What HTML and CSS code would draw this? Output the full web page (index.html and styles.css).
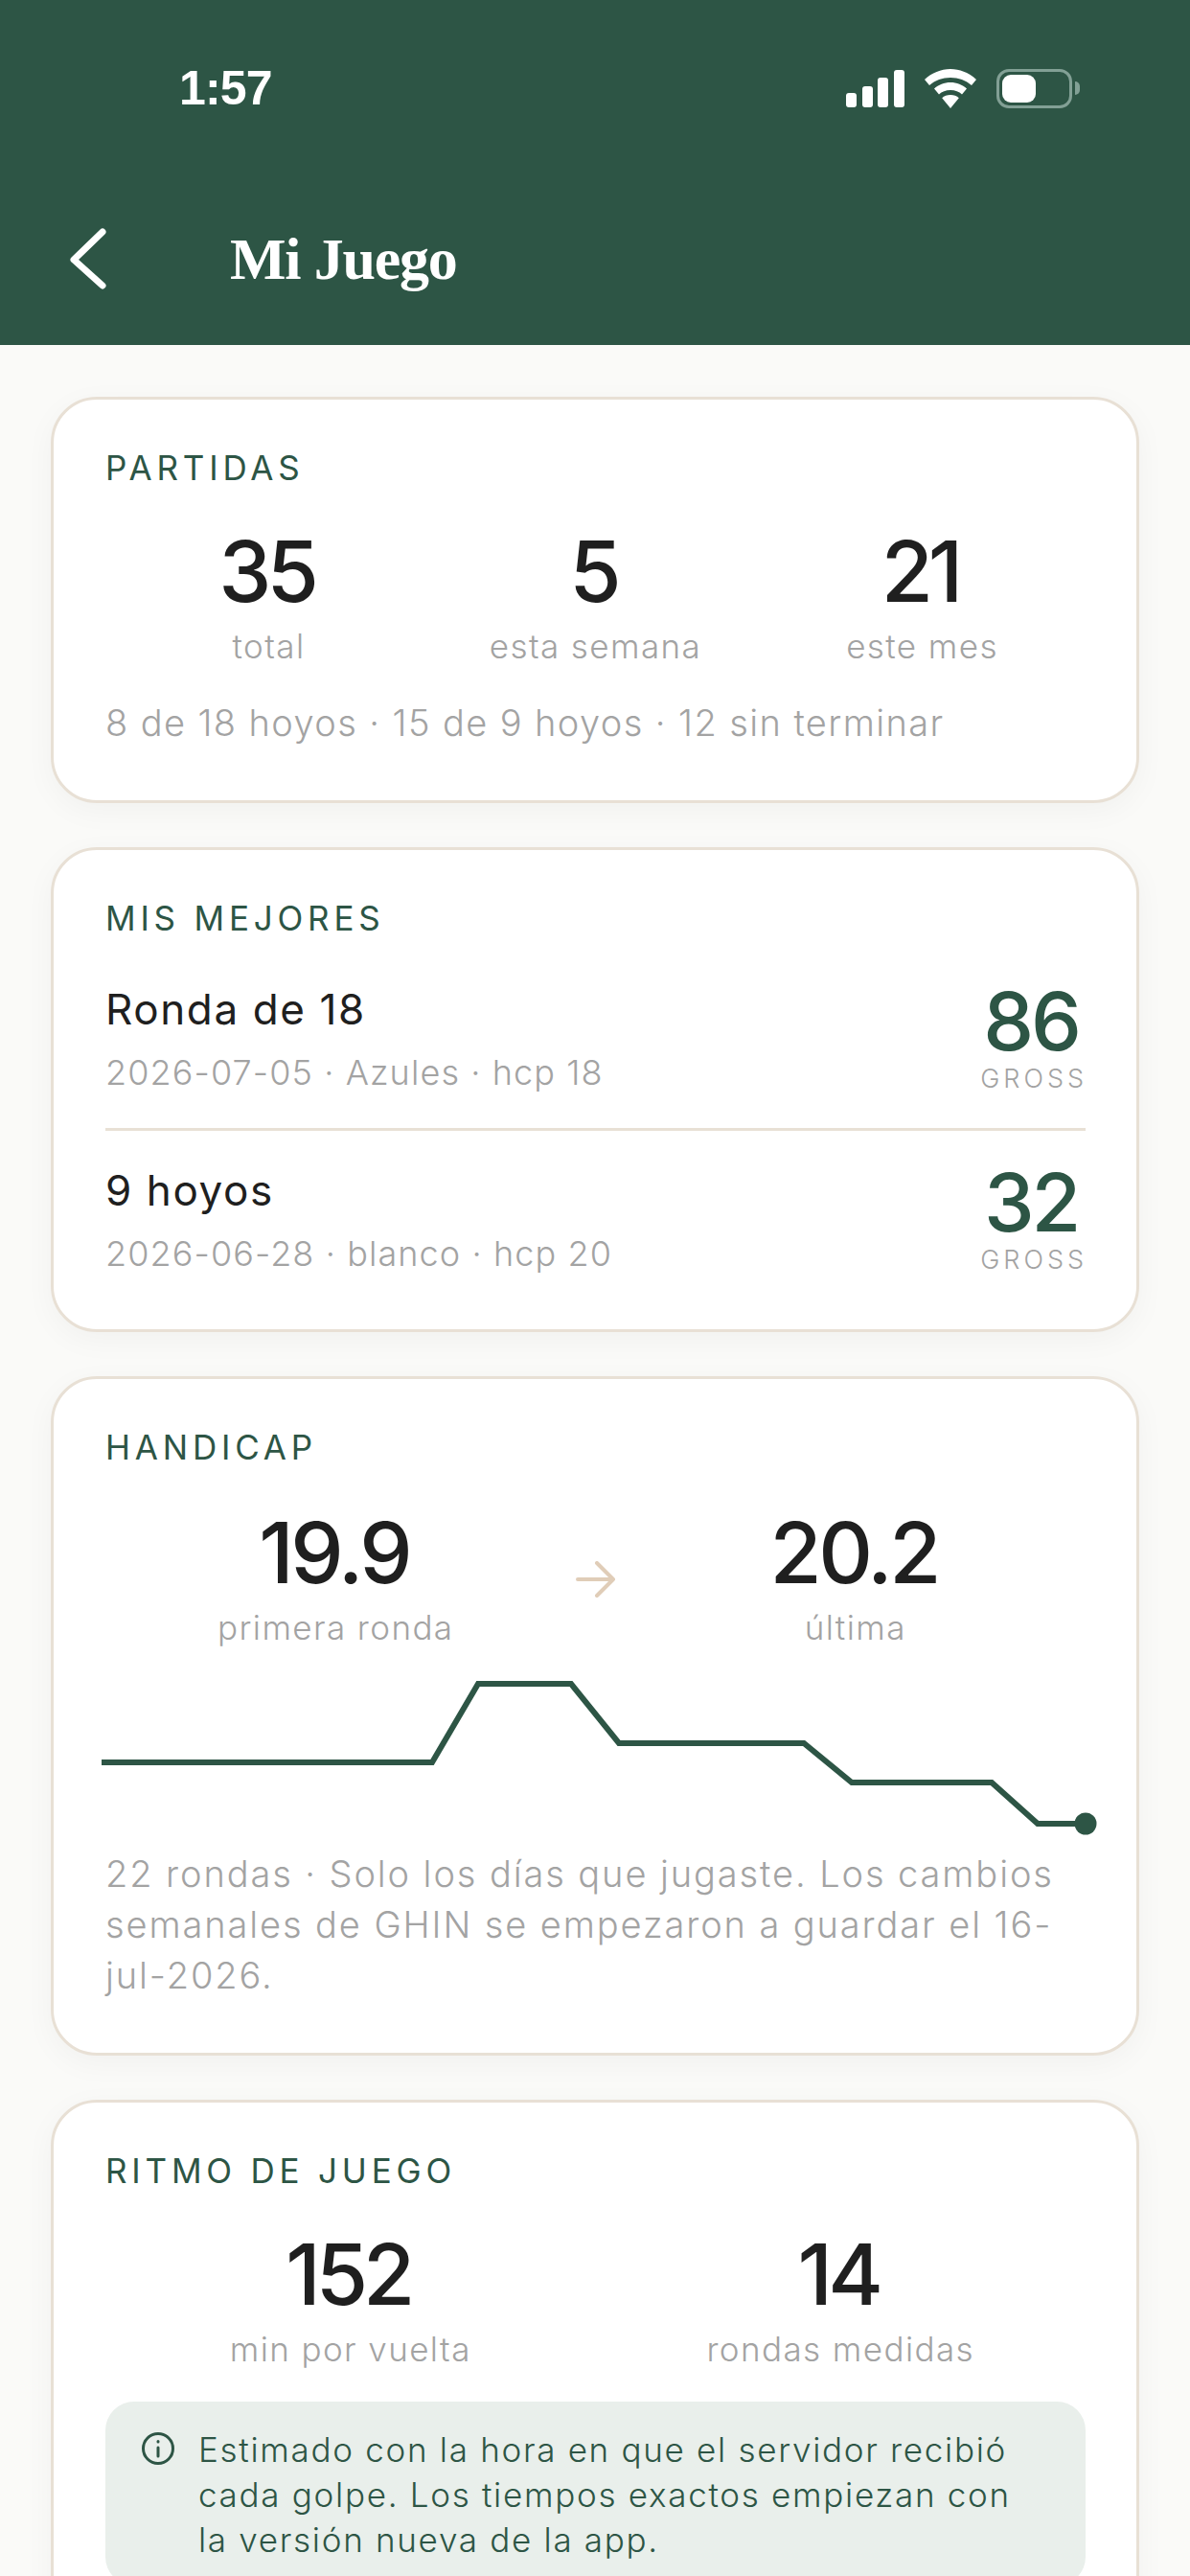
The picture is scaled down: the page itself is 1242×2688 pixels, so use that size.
FILE: index.html
```html
<!DOCTYPE html>
<html lang="es">
  <head>
    <meta charset="UTF-8" />
    <title>Mi Juego</title>
    <link rel="stylesheet" href="styles.css">
  </head>
  <body>
    <!-- Cabecera -->
    <header class="header">
      <div class="status-bar">
        <div class="status-time">1:57</div>
        <div class="status-icons">
          <svg width="61" height="39" viewBox="0 0 61 39" fill="#fff">
            <rect x="0" y="24" width="11" height="15" rx="3" />
            <rect x="17" y="17" width="11" height="22" rx="3" />
            <rect x="33" y="8" width="11" height="31" rx="3" />
            <rect x="50" y="0" width="11" height="39" rx="3" />
          </svg>
          <svg width="54" height="41" viewBox="0 0 54 41" fill="#fff">
            <path d="M27 0c10 0 19.500 4 27 11l-5 6C43 11.800 35.500 9 27 9S11 11.800 5 17l-5-6C7.500 4 17 0 27 0z" />
            <path d="M27 14c6.500 0 12.500 2.500 17 6.500l-5 6C36 23.500 31.800 22 27 22s-9 1.500-12 4.500l-5-6C14.500 16.500 20.500 14 27 14z" />
            <path d="M27 27c3.500 0 6.500 1.200 8.800 3.200L27 41l-8.800-10.800C20.500 28.200 23.500 27 27 27z" />
          </svg>
          <div class="battery">
            <div class="battery-level"></div>
            <div class="battery-cap"></div>
          </div>
        </div>
      </div>
      <div class="nav-bar">
        <svg class="back-icon" width="40" height="64" viewBox="0 0 40 64" fill="none" stroke="#fff" stroke-width="7" stroke-linecap="round" stroke-linejoin="round">
          <path d="M35 4 L5 33 L35 60" />
        </svg>
        <div class="nav-title">Mi Juego</div>
      </div>
    </header>

    <main class="content">
      <!-- Partidas -->
      <section class="card">
        <div class="card-title">PARTIDAS</div>
        <div class="stats stats-three">
          <div class="stat">
            <div class="stat-value">35</div>
            <div class="stat-label">total</div>
          </div>
          <div class="stat">
            <div class="stat-value">5</div>
            <div class="stat-label">esta semana</div>
          </div>
          <div class="stat">
            <div class="stat-value">21</div>
            <div class="stat-label">este mes</div>
          </div>
        </div>
        <div class="note note-games">8 de 18 hoyos · 15 de 9 hoyos · 12 sin terminar</div>
      </section>

      <!-- Mis mejores -->
      <section class="card">
        <div class="card-title">MIS MEJORES</div>
        <div class="best-row best-row-first">
          <div class="best-info">
            <div class="best-name">Ronda de 18</div>
            <div class="best-meta">2026-07-05 · Azules · hcp 18</div>
          </div>
          <div class="best-score">
            <div class="best-value">86</div>
            <div class="best-label">GROSS</div>
          </div>
        </div>
        <div class="best-row">
          <div class="best-info">
            <div class="best-name">9 hoyos</div>
            <div class="best-meta">2026-06-28 · blanco · hcp 20</div>
          </div>
          <div class="best-score">
            <div class="best-value">32</div>
            <div class="best-label">GROSS</div>
          </div>
        </div>
      </section>

      <!-- Handicap -->
      <section class="card">
        <div class="card-title">HANDICAP</div>
        <div class="handicap">
          <div class="stat">
            <div class="stat-value">19.9</div>
            <div class="stat-label">primera ronda</div>
          </div>
          <svg class="handicap-arrow" width="42" height="38" viewBox="0 0 42 38" fill="none" stroke="#e0cdb8" stroke-width="4" stroke-linecap="round" stroke-linejoin="round">
            <path d="M2 19 H39 M22 2 L39 19 L22 36" />
          </svg>
          <div class="stat">
            <div class="stat-value">20.2</div>
            <div class="stat-label">última</div>
          </div>
        </div>
        <svg class="chart" width="1042" height="164" viewBox="0 0 1042 164" fill="none">
          <polyline points="0,86 345,86 393,4 490,4 540,66 733,66 783,107 929,107 977,150 1027,150" stroke="#2d5545" stroke-width="6" />
          <circle cx="1027" cy="150" r="11.500" fill="#2d5545" />
        </svg>
        <div class="note note-handicap">22 rondas · Solo los días que jugaste. Los cambios semanales de GHIN se empezaron a guardar el 16-jul-2026.</div>
      </section>

      <!-- Ritmo de juego -->
      <section class="card">
        <div class="card-title">RITMO DE JUEGO</div>
        <div class="stats stats-two">
          <div class="stat">
            <div class="stat-value">152</div>
            <div class="stat-label">min por vuelta</div>
          </div>
          <div class="stat">
            <div class="stat-value">14</div>
            <div class="stat-label">rondas medidas</div>
          </div>
        </div>
        <div class="info-box">
          <svg class="info-icon" width="36" height="36" viewBox="0 0 36 36" fill="none" stroke="#2d5545" stroke-width="3" stroke-linecap="round">
            <circle cx="18" cy="18" r="15.500" />
            <path d="M18 17 V26" />
            <path d="M18 10.500 V11" />
          </svg>
          <div class="info-text">Estimado con la hora en que el servidor recibió cada golpe. Los tiempos exactos empiezan con la versión nueva de la app.</div>
        </div>
      </section>
    </main>
  </body>
</html>
```

FILE: styles.css
```css
html,
body {
  margin: 0;
  height: 2688px;
  overflow: hidden;
}

body {
  font-family: "Inter", "Liberation Sans", sans-serif;
  background: #fafaf8;
  color: #1f1f1f;
}

/* Cabecera */
.header {
  height: 360px;
  background: #2d5545;
  color: #fff;
  display: flex;
  flex-direction: column;
}

.status-bar {
  display: flex;
  justify-content: space-between;
  align-items: center;
  padding: 66px 123px 0 187px;
  height: 52px;
}

.status-time {
  font-family: "Liberation Sans", sans-serif;
  font-size: 50px;
  font-weight: 700;
  letter-spacing: -0.800px;
}

.status-icons {
  display: flex;
  align-items: center;
  gap: 21px;
}

.battery {
  width: 79px;
  height: 41px;
  border: 3px solid #82a095;
  border-radius: 13px;
  padding: 3px;
  box-sizing: border-box;
  position: relative;
}

.battery-level {
  width: 35px;
  height: 100%;
  background: #fff;
  border-radius: 9px;
}

.battery-cap {
  position: absolute;
  right: -11px;
  top: 10px;
  width: 5px;
  height: 14px;
  background: #82a095;
  border-radius: 0 5px 5px 0;
}

.nav-bar {
  display: flex;
  align-items: center;
  padding: 112px 0 0 72px;
}

.nav-title {
  margin-left: 128px;
  font-family: "Liberation Serif", serif;
  font-size: 62px;
  font-weight: 700;
  line-height: 80px;
  letter-spacing: -1.200px;
}

/* Tarjetas */
.content {
  display: flex;
  flex-direction: column;
  gap: 46px;
  padding: 54px 53px 0;
}

.card {
  background: #fff;
  border: 3px solid #e8e0d5;
  border-radius: 48px;
  box-shadow: 0 8px 32px rgba(0, 0, 0, 0.04);
  padding: 51px 53px 54px 54px;
}

.card-title {
  font-size: 35px;
  line-height: 40px;
  letter-spacing: 4.800px;
  color: #2d5545;
}

.stats {
  display: grid;
  margin-top: 36px;
}

.stats-three {
  grid-template-columns: repeat(3, 1fr);
}

.stats-two {
  grid-template-columns: repeat(2, 1fr);
}

.stat {
  display: flex;
  flex-direction: column;
  align-items: center;
}

.stat-value {
  margin-left: -5px;
  font-size: 88px;
  font-weight: 500;
  line-height: 104px;
  letter-spacing: -5px;
  color: #1f1f1f;
}

.stat-label {
  margin-top: 6px;
  font-size: 35px;
  font-weight: 300;
  line-height: 40px;
  letter-spacing: 1.400px;
  color: #a3a3a3;
}

.note {
  font-size: 38px;
  font-weight: 300;
  line-height: 53px;
  letter-spacing: 1.400px;
  color: #a3a3a3;
}

.note-games {
  margin-top: 34px;
}

.note-handicap {
  margin-top: 12px;
  letter-spacing: 1.900px;
}

/* Mis mejores */
.best-row {
  display: flex;
  justify-content: space-between;
  align-items: flex-start;
  padding-top: 34px;
}

.best-row-first {
  padding: 47px 0 33px;
  border-bottom: 3px solid #e8e0d5;
}

.best-name {
  font-size: 44px;
  line-height: 56px;
  letter-spacing: 1.600px;
  color: #1f1f1f;
}

.best-meta {
  margin-top: 13px;
  font-size: 36px;
  font-weight: 300;
  line-height: 50px;
  letter-spacing: 1.100px;
  color: #a3a3a3;
}

.best-score {
  display: flex;
  flex-direction: column;
  align-items: center;
  padding-top: 1px;
  margin-right: -2px;
}

.best-value {
  margin-left: -6px;
  font-size: 84px;
  font-weight: 500;
  line-height: 80px;
  letter-spacing: -3px;
  color: #2d5545;
}

.best-label {
  margin-top: 4px;
  font-size: 27px;
  font-weight: 300;
  line-height: 32px;
  letter-spacing: 4px;
  color: #a3a3a3;
}

/* Handicap */
.handicap {
  display: grid;
  grid-template-columns: 1fr 42px 1fr;
  column-gap: 10px;
  align-items: center;
  margin-top: 38px;
}

.handicap .stat-value {
  letter-spacing: -3.500px;
  margin-left: -3px;
}

.handicap-arrow {
  margin-top: 10px;
}

.chart {
  display: block;
  margin: 35px 0 0 -4px;
}

/* Nota informativa */
.info-box {
  display: flex;
  gap: 24px;
  margin-top: 35px;
  padding: 27px 44px 24px 37px;
  background: #e9efeb;
  border-radius: 30px;
}

.info-icon {
  flex: none;
  margin-top: 4px;
}

.info-text {
  font-size: 35px;
  font-weight: 300;
  line-height: 47px;
  letter-spacing: 1.700px;
  color: #2d5545;
}
```
